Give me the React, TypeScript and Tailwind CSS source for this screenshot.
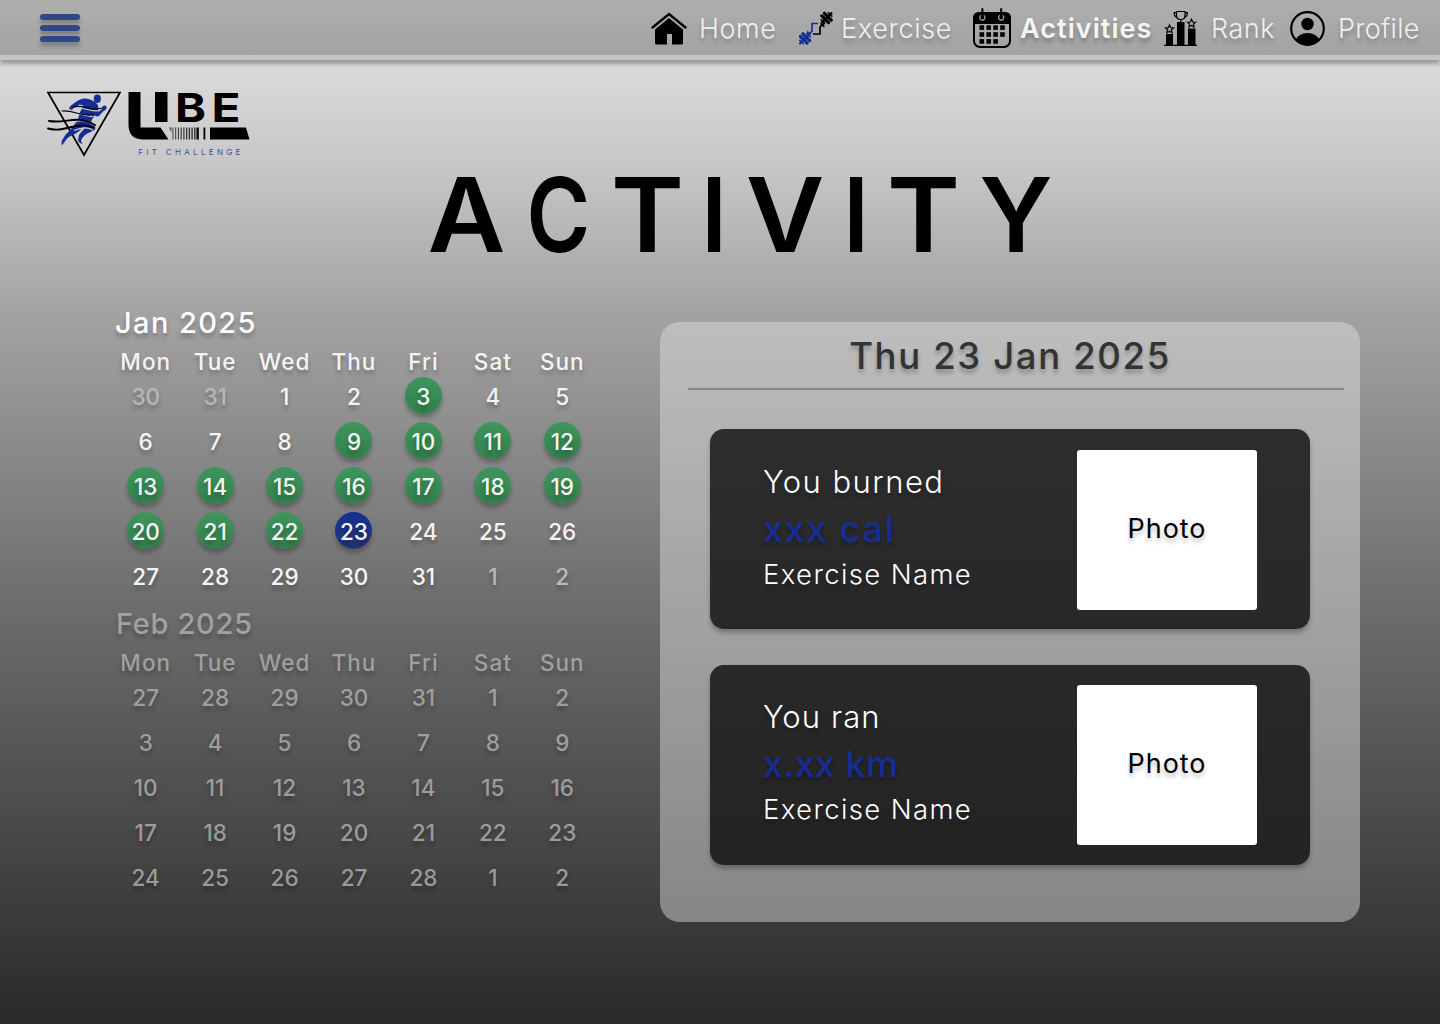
import React from "react";

const softText = "[text-shadow:0_4px_4px_rgba(0,0,0,0.25)]";

function HomeIcon() {
  return (
    <svg className="h-[34px] w-[36px] shrink-0" viewBox="0 0 36 34">
      <path d="M1.500 16.500 18 3l16.500 13.500" fill="none" stroke="#000" strokeWidth="2.300" strokeLinecap="round" />
      <path d="M4 18.500 18 7l14 11.500V32q0 1.500-1.500 1.500H21V23h-5v10.500H5.500q-1.500 0-1.500-1.500z" />
    </svg>
  );
}

function Weight({ color }: { color: string }) {
  return (
    <g stroke={color} strokeLinecap="round">
      <path d="M-7 0h14" strokeWidth="2.200" />
      <path d="M-1.900-4.800V4.800M1.900-4.800V4.800" strokeWidth="3.200" />
      <path d="M-5-2.400v4.800M5-2.400v4.800" strokeWidth="1.700" />
    </g>
  );
}

function ExerciseIcon() {
  return (
    <svg className="h-[34px] w-[34px] shrink-0" viewBox="0 0 34 34">
      <g transform="translate(6 27.500) rotate(-45)"><Weight color="#162e93" /></g>
      <g transform="translate(27.500 7) rotate(-45)"><Weight color="#000" /></g>
      <path d="M9 24.500v-3l1.500 1.500 2.500-3V12.500H19" fill="none" stroke="#162e93" strokeWidth="1.700" />
      <path d="M24.500 10.500v4.500l-2-1.500-1.500 3V23H14" fill="none" stroke="#000" strokeWidth="1.700" />
    </svg>
  );
}

function CalendarIcon() {
  const dots = [0, 1, 2, 3, 4, 5, 6, 7, 8, 9, 10];
  return (
    <svg className="h-[40px] w-[38px] shrink-0" viewBox="0 0 38 40">
      <rect x="1" y="5" width="36" height="34" rx="6" fill="none" stroke="#000" strokeWidth="2" />
      <path d="M0 16v-6q0-6 6-6h26q6 0 6 6v6z" />
      <g fill="none" stroke="#aaa" strokeWidth="1.200">
        <path d="M8.200 7.200a2.600 2.600 0 1 0 2.400 0M27 7.200a2.600 2.600 0 1 0 2.400 0" />
      </g>
      <path d="M9.400 1v8M28.200 1v8" stroke="#000" strokeWidth="2" strokeLinecap="round" />
      {dots.map((d) => (
        <rect key={d} x={6.500 + (d % 4) * 6.900} y={17.300 + Math.floor(d / 4) * 6.900} width="4.600" height="4.600" />
      ))}
    </svg>
  );
}

function RankIcon() {
  const star = "M0-4 1.200-1.300 4-1.100 1.900.8 2.500 3.700 0 2.200-2.500 3.700-1.900.8-4-1.100-1.200-1.300z";
  return (
    <svg className="h-[36px] w-[33px] shrink-0" viewBox="0 0 33 36">
      <path d="M2 24h7v11H2zM13 12h7.500v23H13zM24 18.500h7.500V35H24z" />
      <path d="M0 35.300h33" stroke="#000" strokeWidth="1.200" />
      <g fill="none" stroke="#000" strokeWidth="1.200">
        <path d="M12.500 1.500h8.500v4q0 4-4.250 4t-4.250-4zM12.500 2.700h-2.300q0 4.300 3.300 4.500M21 2.700h2.300q0 4.300-3.300 4.500M16.750 9v3" />
        <path d={star} transform="translate(5.500 19)" />
        <path d={star} transform="translate(27.500 13.300)" />
      </g>
    </svg>
  );
}

function ProfileIcon() {
  return (
    <svg className="h-[36px] w-[36px] shrink-0" viewBox="0 0 36 36">
      <circle cx="17.500" cy="18.500" r="16.300" fill="none" stroke="#000" strokeWidth="2.200" />
      <circle cx="17.500" cy="14" r="6.200" />
      <path d="M6 29.500q3-6.500 11.500-6.500t11.500 6.500q-4.500 6-11.500 6T6 29.500z" />
    </svg>
  );
}

function Logo() {
  const bars = [0, 1, 2, 3, 4, 5, 6, 7, 8];
  return (
    <svg className="h-[76px] w-[210px] overflow-visible" viewBox="45 86 210 76">
      <path d="M48 92.500h72L84 155z" fill="none" stroke="#000" strokeWidth="1.700" />
      <g fill="#162e93">
        <ellipse cx="97.300" cy="98.800" rx="3.600" ry="4.200" />
        <path d="M94 101.500c-5-3.500-11-4-15-1.500-4 2.500-8 5-9.500 7-1 2 1 3.500 3 2.500l7-5 4 1c-1 3-4 6-5 12l-2 7 14 2c0-5 2-8 4-11 3-2 4-4 4-7 0-3-1.500-5.500-4.500-7z" />
        <path d="M95 106c2 2 3 4 3.500 6l3.500-3c-.5-3 3-4.500 4.500-2.500.5 3-1.500 4-3 4.500l-4.500 5c-3 1.500-5-1-7-4z" />
        <path d="M78 122l14 2c3 1.500 4.500 4 2.500 6-3 2-7 3-10 5.500-2 2-3 3.500-3.500 5.500l1.500 3c-2-.5-4.500-2.500-4.500-4l1-5c2-3 4-5 6-7l-7-2z" />
        <path d="M77 121l7 5c-3 4-7 7-11 9-3.500 1-6 3-7.500 5.500-1 1.500-2 3-3.500 5-1-3-.5-5 1-6.500 1.500-3 3.500-6 7-8.500z" />
      </g>
      <g fill="none" stroke="#cfcfcf" strokeWidth="1.100">
        <path d="M73 108.600c11-3 18 5 27 1.600M76 113.500c7 .5 11 3.500 17 2.800M72 122.500c8-3 15-3 22 3M74 130.500c7-3 13-4 19-.5" />
      </g>
      <g fill="none" stroke="#000" strokeLinecap="round">
        <path d="M73 107c11-3 18 5 29 1" strokeWidth="1.200" />
        <path d="M62 111c13-1 18 6 31 3.500" strokeWidth="1.200" />
        <path d="M49 121c18 3 27-7 46 4M48 128.500c18 5 27-8 45-1" strokeWidth="1.900" />
      </g>
      <path d="M128.500 92h12v35.500h20l8 12h-25q-15 0-15-15z" />
      <rect x="155" y="92" width="12.500" height="30" />
      <path d="M210 127.500h36l3.500 12H210z" />
      <path d="M169 127.500l2.500 5v-5z" fill="#555" />
      {bars.map((b) => (
        <rect key={b} x={172.500 + b * 2.700} y="127.500" width={0.900 + b * 0.070} height="12" fill="#333" />
      ))}
      <path d="M196.500 127.500h2.300v12h-2.300zM203.500 127.500h1.800v12h-1.800z" />
      <text x="175" y="121.700" fontFamily="Inter" fontSize="40" fontWeight="700" textLength="31" lengthAdjust="spacingAndGlyphs">B</text>
      <text x="211.500" y="121.700" fontFamily="Inter" fontSize="40" fontWeight="700" textLength="29" lengthAdjust="spacingAndGlyphs">E</text>
      <text x="138.300" y="155" fontFamily="Inter" fontSize="8" fill="#3c4fa0" textLength="102">FIT CHALLENGE</text>
    </svg>
  );
}

function Navbar() {
  const label = `pt-px text-[27px] leading-none font-light text-[#f0f0f0] whitespace-nowrap ${softText}`;
  return (
    <header className="box-border flex h-[60px] items-start border-b-[5px] border-[#c4c4c4] bg-linear-to-b from-[#aeaeae] to-[#a3a3a3] shadow-[0_4px_4px_rgba(0,0,0,0.3)]">
      <button aria-label="Menu" className="mt-[14px] ml-10 flex w-10 flex-col gap-[5px]">
        <span className="h-1.5 rounded-full bg-[#304686] shadow-[0_4px_4px_rgba(0,0,0,0.25)]" />
        <span className="h-1.5 rounded-full bg-[#304686] shadow-[0_4px_4px_rgba(0,0,0,0.25)]" />
        <span className="h-1.5 rounded-full bg-[#304686] shadow-[0_4px_4px_rgba(0,0,0,0.25)]" />
      </button>
      <nav className="ml-auto flex h-[56px] items-center">
        <HomeIcon />
        <span className={`ml-[12px] w-[100px] tracking-[0.02em] ${label}`}>Home</span>
        <ExerciseIcon />
        <span className={`ml-[8px] w-[132px] tracking-[0.025em] ${label}`}>Exercise</span>
        <CalendarIcon />
        <span className={`ml-[9px] w-[144px] pt-px text-[27px] leading-none font-semibold tracking-[0.039em] whitespace-nowrap text-[#f5f5f5] ${softText}`}>Activities</span>
        <RankIcon />
        <span className={`ml-[14px] w-[79px] tracking-[0.02em] ${label}`}>Rank</span>
        <ProfileIcon />
        <span className={`ml-[12px] w-[102px] tracking-[0.010em] ${label}`}>Profile</span>
      </nav>
    </header>
  );
}

function Title() {
  return (
    <h1 aria-label="ACTIVITY" className="flex h-[76px] w-[622px] items-center gap-[27.300px] text-[103px] leading-none font-semibold text-black">
      <span className="flex w-[73px] scale-x-[1.040] justify-center">A</span>
      <span className="flex w-[57px] scale-x-[0.840] justify-center">C</span>
      <span className="flex w-[65px] scale-x-[1.080] justify-center">T</span>
      <span className="flex w-[14px] scale-x-[0.900] justify-center">I</span>
      <span className="flex w-[74px] scale-x-[1.050] justify-center">V</span>
      <span className="flex w-[14px] scale-x-[0.900] justify-center">I</span>
      <span className="flex w-[65px] scale-x-[1.080] justify-center">T</span>
      <span className="flex w-[66px] justify-center">Y</span>
    </h1>
  );
}

const weekdays = ["Mon", "Tue", "Wed", "Thu", "Fri", "Sat", "Sun"];
const january = [30, 31, ...Array.from({ length: 31 }, (_, i) => i + 1), 1, 2];
const february = [27, 28, 29, 30, 31, ...Array.from({ length: 28 }, (_, i) => i + 1), 1, 2];
const trained = [3, 9, 10, 11, 12, 13, 14, 15, 16, 17, 18, 19, 20, 21, 22];

function Month({ title, days, active }: { title: string; days: number[]; active: boolean }) {
  return (
    <section className={`h-[301px] w-[486px] ${active ? "text-[#f4f4f4]" : "text-[#b4b4b4]/80"}`}>
      <h2 className={`flex h-[40px] items-center pt-[2px] text-[29px] font-medium ${softText} ${active ? "ml-[4px] tracking-[0.048em] text-white" : "ml-[5px] tracking-[0.024em]"}`}>{title}</h2>
      <div className={`grid h-[37px] grid-cols-7 items-center pt-[2px] text-center text-[22.500px] font-medium tracking-[0.045em] ${softText}`}>
        {weekdays.map((d) => <span key={d}>{d}</span>)}
      </div>
      <div className="-mt-[6px] grid auto-rows-[45px] grid-cols-7 text-center text-[22.500px] font-medium">
        {days.map((d, i) => {
          const inside = active && i > 1 && i < 33;
          const done = inside && trained.includes(d);
          const today = inside && d === 23;
          return (
            <div key={i} className="flex items-center justify-center">
              <span
                className={`flex h-[37px] w-[37px] items-center justify-center rounded-full pt-[2px] ${softText} ${
                  done ? "bg-linear-to-b from-[#3e965d] to-[#32804c] shadow-[0_4px_4px_rgba(0,0,0,0.25)]" : ""
                } ${today ? "bg-linear-to-b from-[#162e93] to-[#243575] shadow-[0_4px_4px_rgba(0,0,0,0.25)]" : ""} ${
                  active && !inside ? "text-[#b8b8b8]" : ""
                }`}
              >
                {d}
              </span>
            </div>
          );
        })}
      </div>
    </section>
  );
}

function ActivityCard({ heading, value, second = false }: { heading: string; value: string; second?: boolean }) {
  return (
    <article
      className={`flex h-[200px] w-[600px] justify-between rounded-[14px] bg-linear-to-b px-[53px] shadow-[0_4px_4px_rgba(0,0,0,0.25)] ${
        second ? "from-[#292929] to-[#232323] pt-[20px]" : "from-[#2d2d2d] to-[#282828] pt-[21px]"
      }`}
    >
      <div className={`flex flex-col pt-[8px] whitespace-nowrap text-white ${softText}`}>
        <p className={`flex h-12 items-center text-[31px] font-light ${second ? "tracking-[0.035em]" : "tracking-[0.047em]"}`}>{heading}</p>
        <p className={`flex h-[46px] items-center text-[36px] font-medium text-[#162e93] ${second ? "tracking-[0.010em]" : "tracking-[0.048em]"}`}>{value}</p>
        <p className="flex h-11 items-center pt-[2px] text-[27.500px] font-light tracking-[0.050em]">Exercise Name</p>
      </div>
      <div className={`flex h-[160px] w-[180px] items-center justify-center rounded-[3px] bg-white pb-[2px] text-[27px] tracking-[0.035em] text-black ${softText}`}>
        Photo
      </div>
    </article>
  );
}

export default function App() {
  return (
    <div className="flex h-[1024px] w-[1440px] flex-col overflow-hidden bg-[linear-gradient(to_bottom,#e8e8e8_0%,#c6c6c6_16.500%,#a4a4a4_30%,#6d6d6d_59%,#3a3a3a_90%,#292929_100%)] font-['Inter',sans-serif]">
      <Navbar />
      <div className="mt-[26px] ml-[45px] h-[76px]"><Logo /></div>
      <div className="mt-[14px] ml-[430px]"><Title /></div>
      <main className="mt-[50px] flex pl-[111px]">
        <div className="flex w-[549px] flex-col">
          <Month title="Jan 2025" days={january} active />
          <Month title="Feb 2025" days={february} active={false} />
        </div>
        <section className="mt-[20px] flex h-[600px] w-[700px] flex-col items-center rounded-[20px] bg-linear-to-b from-[#bebebe] to-[#868686]">
          <div className={`ml-[12px] flex h-[68px] w-[656px] items-center justify-center border-b-2 border-[#888] pt-[2px] pr-3 text-[36.500px] font-medium tracking-[0.045em] text-[#333] ${softText}`}>
            Thu 23 Jan 2025
          </div>
          <div className="mt-[39px] flex flex-col gap-9">
            <ActivityCard heading="You burned" value="xxx cal" />
            <ActivityCard heading="You ran" value="x.xx km" second />
          </div>
        </section>
      </main>
    </div>
  );
}
